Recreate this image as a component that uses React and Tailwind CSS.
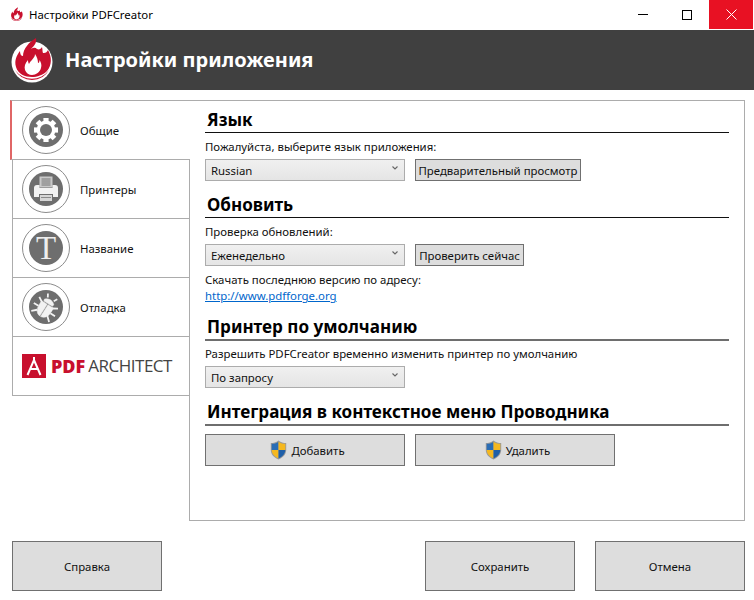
import React from "react";

function FlameLogo({ size = 46 }) {
  return (
    <svg width={size} height={size} viewBox="0 0 46 46" className="shrink-0">
      <circle cx="23" cy="25" r="20.5" fill="#fff" />
      <path d="M6 33 A19.5 19.5 0 0 0 40 33 A21 21 0 0 1 6 33Z" fill="#c8102e" />
      <path d="M27 1 C28 6 25 9 22 12 C24 11 26 10 28 12 C30 13 32 12 33 10 C34 14 33 16 35 16 C37 16 38 15 39 13 C43 20 43 28 38 34 C34 38 28 40 23 40 C16 40 9 37 7 30 C5 23 8 18 11 14 C11 17 12 19 14 19 C14 12 20 5 27 1Z" fill="#c8102e" />
      <path d="M26 17 C26 21 22 23 20 27 C19 25 19 24 19 23 C16 26 15 30 16 33 C17 36 20 38 23 38 C27 38 31 35 32 31 C33 28 32 25 30.5 23 C30.5 25 30 26 29 26 C29 23 28 20 26 17Z" fill="#fff" />
    </svg>
  );
}

function RingIcon({ children }) {
  return (
    <div className="w-[48px] h-[48px] shrink-0 rounded-full border border-[#8c8c8c] bg-white flex items-center justify-center">
      <div className="w-[34px] h-[34px] rounded-full bg-[#6e6e6e] flex items-center justify-center overflow-hidden">
        {children}
      </div>
    </div>
  );
}

const gearTeeth = [0, 45, 90, 135, 180, 225, 270, 315];
function GearIcon() {
  return (
    <svg width="34" height="34" viewBox="0 0 34 34">
      {gearTeeth.map((a) => (
        <rect key={a} x="14.4" y="5" width="5.2" height="6" fill="#fff" transform={`rotate(${a} 17 17)`} />
      ))}
      <circle cx="17" cy="17" r="9.4" fill="#fff" />
      <circle cx="17" cy="17" r="6" fill="#6e6e6e" />
    </svg>
  );
}

function PrinterIcon() {
  return (
    <svg width="34" height="34" viewBox="0 0 34 34">
      <rect x="10.5" y="4.5" width="13" height="11" fill="#c9c9c9" />
      <path d="M12.5 7h9M12.5 9h9M12.5 11h9M12.5 13h9" stroke="#777" strokeWidth="1" />
      <path d="M5 16 Q5 13 8 13 H10.5 V16 H23.5 V13 H26 Q29 13 29 16 V25 H5Z" fill="#f2f2f2" />
      <rect x="10" y="22" width="14" height="8" fill="#6e6e6e" />
      <rect x="11" y="23" width="12" height="6" fill="#d6d6d6" />
      <rect x="12" y="25" width="10" height="1" fill="#8a8a8a" />
    </svg>
  );
}

function BugIcon() {
  return (
    <svg width="34" height="34" viewBox="0 0 34 34">
      <g transform="rotate(32 17 17)" fill="#f2f2f2" stroke="#f2f2f2">
        <path d="M11.5 11 Q17 6 22.5 11 L22 13 H12Z" strokeWidth="0.5" />
        <path d="M10 14 H16.5 V28 Q10 27 10 19Z" strokeWidth="0.5" />
        <path d="M17.5 14 H24 V19 Q24 27 17.5 28Z" strokeWidth="0.5" />
        <path d="M13.5 8 L11.5 4.5 M20.5 8 L22.5 4.5" strokeWidth="1.8" fill="none" />
        <path d="M11 15 L6 12 M23 15 L28 12 M10 20 H4.5 M24 20 H29.5 M11 24 L6.5 28 M23 24 L27.5 28" strokeWidth="1.8" fill="none" />
      </g>
    </svg>
  );
}

function ShieldIcon() {
  return (
    <svg width="17" height="20" viewBox="0 0 17 20" className="shrink-0">
      <path d="M8.5 0.5 C6 2.5 3.5 3 0.8 3 V10 C0.8 14.5 4 17.5 8.5 19.5 C13 17.5 16.2 14.5 16.2 10 V3 C13.5 3 11 2.5 8.5 0.5Z" fill="#9a9a9a" />
      <path d="M8.5 1.7 V10 H1.7 V3.8 C4 3.8 6.3 3.3 8.5 1.7Z" fill="#2a6db5" />
      <path d="M8.5 1.7 C10.7 3.3 13 3.8 15.3 3.8 V10 H8.5Z" fill="#f5b81f" />
      <path d="M1.7 10 H8.5 V18.4 C4.5 16.6 1.9 14 1.7 10Z" fill="#f5b81f" />
      <path d="M8.5 10 H15.3 C15.1 14 12.5 16.6 8.5 18.4Z" fill="#1f5fa8" />
    </svg>
  );
}

function Chevron() {
  return (
    <svg width="6" height="4" viewBox="0 0 6 4" className="shrink-0 block">
      <path d="M0.5 0.5 L3 3 L5.5 0.5" stroke="#666" strokeWidth="1.1" fill="none" />
    </svg>
  );
}

function Select({ value }) {
  return (
    <div className="w-[200px] h-[22px] border border-[#acacac] bg-gradient-to-b from-[#f0f0f0] to-[#e5e5e5] flex items-center justify-between pl-[5px] pr-[6px]">
      <span className="pt-[2px]">{value}</span>
      <span className="-translate-y-[2px]"><Chevron /></span>
    </div>
  );
}

function Heading({ children, className = "", line = "bg-[#111] h-[1px]", wrap = "pb-[1px]" }) {
  return (
    <div className={`${wrap} ${className}`}>
      <div className="pl-[2px] h-[24px] leading-[24px] text-[17.1px] font-bold text-black whitespace-nowrap">{children}</div>
      <div className={line} />
    </div>
  );
}

const grayLine = "bg-[#6e6e6e] h-[2px]";

function SmallButton({ children, className = "" }) {
  return (
    <div className={`h-[22px] pt-[2px] bg-[#dddddd] border border-[#707070] flex items-center justify-center whitespace-nowrap ${className}`}>{children}</div>
  );
}

function BigButton({ children }) {
  return (
    <div className="w-[150px] h-[50px] pt-[2px] bg-[#dddddd] border border-[#707070] flex items-center justify-center">{children}</div>
  );
}

function ShieldButton({ label }) {
  return (
    <div className="w-[200px] h-[32px] pl-[5px] bg-[#dddddd] border border-[#707070] flex items-center justify-center gap-[4px]">
      <ShieldIcon />
      <span className="pt-[2px]">{label}</span>
    </div>
  );
}

function NavItem({ icon, label, active }) {
  return (
    <div
      className={
        active
          ? "h-[60px] w-[180px] -ml-[2px] relative z-10 bg-white flex items-center border-t border-t-[#acacac] border-b border-b-[#acacac] border-l-[2px] border-l-[#e06666] pl-[10px]"
          : "h-[59px] flex items-center border-b border-b-[#acacac] border-l border-l-[#acacac] pl-[9px]"
      }
    >
      <RingIcon>{icon}</RingIcon>
      <span className="ml-[10px] pt-[1px]">{label}</span>
    </div>
  );
}

export default function App() {
  return (
    <div
      className="w-[754px] h-[600px] bg-white text-[11.4px] text-[#111] flex flex-col overflow-hidden"
      style={{ fontFamily: '"Noto Sans", "Open Sans", sans-serif' }}
    >
      {/* Title bar */}
      <div className="h-[30px] flex items-start bg-white">
        <div className="h-[29px] flex items-center pl-[9px] gap-[5px] flex-1">
          <FlameLogo size={15} />
          <span className="text-black pt-[1px]">Настройки PDFCreator</span>
        </div>
        <div className="w-[44px] h-[29px] flex items-center justify-center">
          <div className="w-[10px] h-[1px] bg-black" />
        </div>
        <div className="w-[44px] h-[29px] flex items-center justify-center">
          <div className="w-[10px] h-[10px] border border-black" />
        </div>
        <div className="w-[44px] h-[29px] mr-[1px] bg-[#e81123] flex items-center justify-center">
          <svg width="11" height="11" viewBox="0 0 11 11">
            <path d="M0.5 0.5 L10.5 10.5 M10.5 0.5 L0.5 10.5" stroke="#fff" strokeWidth="1" />
          </svg>
        </div>
      </div>

      {/* Header */}
      <div className="h-[60px] bg-[#404040] flex items-center pl-[9px] gap-[10px] shrink-0">
        <FlameLogo size={46} />
        <span className="text-[20px] font-bold text-white whitespace-nowrap">Настройки приложения</span>
      </div>

      {/* Body */}
      <div className="flex pl-[12px] pr-[9px] pt-[10px]">
        {/* Sidebar */}
        <div className="w-[178px] shrink-0 flex flex-col">
          <NavItem active icon={<GearIcon />} label="Общие" />
          <NavItem icon={<PrinterIcon />} label="Принтеры" />
          <NavItem icon={<span className="text-[33px] leading-[34px] text-[#eee]" style={{ fontFamily: '"Liberation Serif", serif' }}>T</span>} label="Название" />
          <NavItem icon={<BugIcon />} label="Отладка" />
          <div className="h-[59px] flex items-center border-b border-l border-[#acacac] pl-[9px]">
            <svg width="24" height="24" viewBox="0 0 24 24" className="shrink-0">
              <rect width="24" height="24" fill="#c8102e" />
              <path d="M5.5 21 L12 6 L18.5 21 M8.5 15 H15.5" stroke="#fff" strokeWidth="2" fill="none" />
              <path d="M12 3 V7" stroke="#fff" strokeWidth="2" />
            </svg>
            <span className="ml-[5px] text-[18px] font-extrabold text-[#c8102e]" style={{ fontFamily: '"Open Sans", sans-serif' }}>PDF</span>
            <span className="ml-[3px] text-[17px] text-[#444] tracking-[-0.5px]" style={{ fontFamily: '"Open Sans", sans-serif' }}>ARCHITECT</span>
          </div>
        </div>

        {/* Main panel */}
        <div className="w-[556px] h-[421px] border border-[#acacac] -ml-[1px] pl-[15px] pr-[15px] pt-[7px]">
          <Heading>Язык</Heading>
          <div className="mt-[5px] h-[16px] leading-[16px]">Пожалуйста, выберите язык приложения:</div>
          <div className="mt-[4px] flex gap-[10px]">
            <Select value="Russian" />
            <SmallButton className="w-[166px]">Предварительный просмотр</SmallButton>
          </div>

          <Heading className="mt-[12px]">Обновить</Heading>
          <div className="mt-[5px] h-[16px] leading-[16px]">Проверка обновлений:</div>
          <div className="mt-[4px] flex gap-[10px]">
            <Select value="Еженедельно" />
            <SmallButton className="w-[109px]">Проверить сейчас</SmallButton>
          </div>
          <div className="mt-[6px] h-[16px] leading-[16px]">Скачать последнюю версию по адресу:</div>
          <div className="h-[16px] leading-[16px] text-[#0066cc] underline">http://www.pdfforge.org</div>

          <Heading className="mt-[11px]" line={grayLine} wrap="">Принтер по умолчанию</Heading>
          <div className="mt-[5px] h-[16px] leading-[16px]">Разрешить PDFCreator временно изменить принтер по умолчанию</div>
          <div className="mt-[4px]"><Select value="По запросу" /></div>

          <Heading className="mt-[12px]" line={grayLine} wrap="">Интеграция в контекстное меню Проводника</Heading>
          <div className="mt-[8px] flex gap-[10px]">
            <ShieldButton label="Добавить" />
            <ShieldButton label="Удалить" />
          </div>
        </div>
      </div>

      {/* Footer */}
      <div className="flex pl-[12px] pr-[9px] mt-[20px]">
        <BigButton>Справка</BigButton>
        <div className="flex-1" />
        <div className="flex gap-[20px]">
          <BigButton>Сохранить</BigButton>
          <BigButton>Отмена</BigButton>
        </div>
      </div>
    </div>
  );
}
